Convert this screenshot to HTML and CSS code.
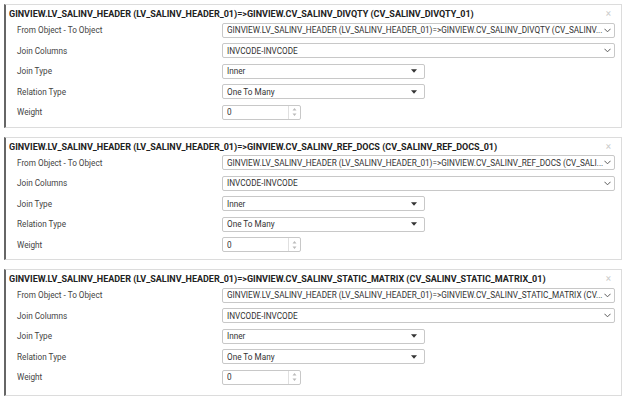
FILE: index.html
```html
<!DOCTYPE html>
<html>
<head>
<meta charset="utf-8">
<link rel="stylesheet" href="styles.css">
</head>
<body>
<div class="list">
  <div class="card">
    <div class="card-title">GINVIEW.LV_SALINV_HEADER (LV_SALINV_HEADER_01)=&gt;GINVIEW.CV_SALINV_DIVQTY (CV_SALINV_DIVQTY_01)</div>
    <span class="close">&#215;</span>
    <div class="rows">
      <div class="label">From Object - To Object</div>
      <div class="field wide"><span class="val">GINVIEW.LV_SALINV_HEADER (LV_SALINV_HEADER_01)=&gt;GINVIEW.CV_SALINV_DIVQTY (CV_SALINV...</span><svg class="chev" viewBox="0 0 8 5"><path d="M0.5 0.5 L4 4 L7.5 0.5" fill="none" stroke="#555" stroke-width="1.1"/></svg></div>
      <div class="label">Join Columns</div>
      <div class="field wide"><span class="val">INVCODE-INVCODE</span><svg class="chev" viewBox="0 0 8 5"><path d="M0.5 0.5 L4 4 L7.5 0.5" fill="none" stroke="#555" stroke-width="1.1"/></svg></div>
      <div class="label">Join Type</div>
      <div class="field mid"><span class="val">Inner</span><svg class="caret" viewBox="0 0 7 4"><path d="M0 0 H7 L3.5 4 Z" fill="#333"/></svg></div>
      <div class="label">Relation Type</div>
      <div class="field mid"><span class="val">One To Many</span><svg class="caret" viewBox="0 0 7 4"><path d="M0 0 H7 L3.5 4 Z" fill="#333"/></svg></div>
      <div class="label">Weight</div>
      <div class="field num"><span class="val">0</span><span class="spin"><svg viewBox="0 0 5 10"><path d="M0.5 3.5 L2.5 1 L4.5 3.5 Z M0.5 6.5 L2.5 9 L4.5 6.5 Z" fill="#bbb"/></svg></span></div>
    </div>
  </div>

  <div class="card">
    <div class="card-title">GINVIEW.LV_SALINV_HEADER (LV_SALINV_HEADER_01)=&gt;GINVIEW.CV_SALINV_REF_DOCS (CV_SALINV_REF_DOCS_01)</div>
    <span class="close">&#215;</span>
    <div class="rows">
      <div class="label">From Object - To Object</div>
      <div class="field wide"><span class="val">GINVIEW.LV_SALINV_HEADER (LV_SALINV_HEADER_01)=&gt;GINVIEW.CV_SALINV_REF_DOCS (CV_SALI...</span><svg class="chev" viewBox="0 0 8 5"><path d="M0.5 0.5 L4 4 L7.5 0.5" fill="none" stroke="#555" stroke-width="1.1"/></svg></div>
      <div class="label">Join Columns</div>
      <div class="field wide"><span class="val">INVCODE-INVCODE</span><svg class="chev" viewBox="0 0 8 5"><path d="M0.5 0.5 L4 4 L7.5 0.5" fill="none" stroke="#555" stroke-width="1.1"/></svg></div>
      <div class="label">Join Type</div>
      <div class="field mid"><span class="val">Inner</span><svg class="caret" viewBox="0 0 7 4"><path d="M0 0 H7 L3.5 4 Z" fill="#333"/></svg></div>
      <div class="label">Relation Type</div>
      <div class="field mid"><span class="val">One To Many</span><svg class="caret" viewBox="0 0 7 4"><path d="M0 0 H7 L3.5 4 Z" fill="#333"/></svg></div>
      <div class="label">Weight</div>
      <div class="field num"><span class="val">0</span><span class="spin"><svg viewBox="0 0 5 10"><path d="M0.5 3.5 L2.5 1 L4.5 3.5 Z M0.5 6.5 L2.5 9 L4.5 6.5 Z" fill="#bbb"/></svg></span></div>
    </div>
  </div>

  <div class="card last">
    <div class="card-title">GINVIEW.LV_SALINV_HEADER (LV_SALINV_HEADER_01)=&gt;GINVIEW.CV_SALINV_STATIC_MATRIX (CV_SALINV_STATIC_MATRIX_01)</div>
    <span class="close">&#215;</span>
    <div class="rows">
      <div class="label">From Object - To Object</div>
      <div class="field wide"><span class="val">GINVIEW.LV_SALINV_HEADER (LV_SALINV_HEADER_01)=&gt;GINVIEW.CV_SALINV_STATIC_MATRIX (CV...</span><svg class="chev" viewBox="0 0 8 5"><path d="M0.5 0.5 L4 4 L7.5 0.5" fill="none" stroke="#555" stroke-width="1.1"/></svg></div>
      <div class="label">Join Columns</div>
      <div class="field wide"><span class="val">INVCODE-INVCODE</span><svg class="chev" viewBox="0 0 8 5"><path d="M0.5 0.5 L4 4 L7.5 0.5" fill="none" stroke="#555" stroke-width="1.1"/></svg></div>
      <div class="label">Join Type</div>
      <div class="field mid"><span class="val">Inner</span><svg class="caret" viewBox="0 0 7 4"><path d="M0 0 H7 L3.5 4 Z" fill="#333"/></svg></div>
      <div class="label">Relation Type</div>
      <div class="field mid"><span class="val">One To Many</span><svg class="caret" viewBox="0 0 7 4"><path d="M0 0 H7 L3.5 4 Z" fill="#333"/></svg></div>
      <div class="label">Weight</div>
      <div class="field num"><span class="val">0</span><span class="spin"><svg viewBox="0 0 5 10"><path d="M0.5 3.5 L2.5 1 L4.5 3.5 Z M0.5 6.5 L2.5 9 L4.5 6.5 Z" fill="#bbb"/></svg></span></div>
    </div>
  </div>
</div>
</body>
</html>
```

FILE: styles.css
```css
* { box-sizing: border-box; }
html, body { margin: 0; padding: 0; background: #fff; }
body {
  font-family: Roboto, "Liberation Sans", sans-serif;
  color: #333;
  width: 626px;
  height: 401px;
  overflow: hidden;
}
.list {
  display: flex;
  flex-direction: column;
  gap: 9px;
  padding: 4px 4px 0 4px;
}
.card {
  position: relative;
  width: 618px;
  border: 1px solid #dcdcdc;
  border-left: 2px solid #666;
  padding: 3px 0 4px 3px;
}
.card.last { padding-bottom: 7px; }
.card-title {
  font-size: 9px;
  font-weight: 700;
  line-height: 12px;
  color: #222;
  white-space: nowrap;
}
.close {
  position: absolute;
  top: 3px;
  right: 10px;
  font-size: 10px;
  line-height: 12px;
  color: #ccc;
}
.rows {
  display: grid;
  grid-template-columns: 213px 1fr;
  grid-auto-rows: 20.5px;
  align-items: center;
}
.label {
  font-size: 8.2px;
  color: #444;
  padding-left: 8px;
  white-space: nowrap;
}
.field {
  height: 15px;
  border: 1px solid #c8c8c8;
  border-radius: 2px;
  display: flex;
  align-items: center;
  font-size: 8.2px;
  color: #333;
  padding-left: 4px;
  white-space: nowrap;
  overflow: hidden;
}
.field .val { flex: 1; overflow: hidden; }
.wide { width: 393px; }
.mid { width: 203px; }
.num { width: 79px; padding-right: 0; }
.chev { width: 7px; height: 5px; margin-right: 3px; }
.caret { width: 6px; height: 4px; margin-right: 7px; }
.spin {
  width: 12px;
  height: 100%;
  border-left: 1px solid #e0e0e0;
  display: flex;
  align-items: center;
  justify-content: center;
}
.spin svg { width: 5px; height: 10px; }
```
